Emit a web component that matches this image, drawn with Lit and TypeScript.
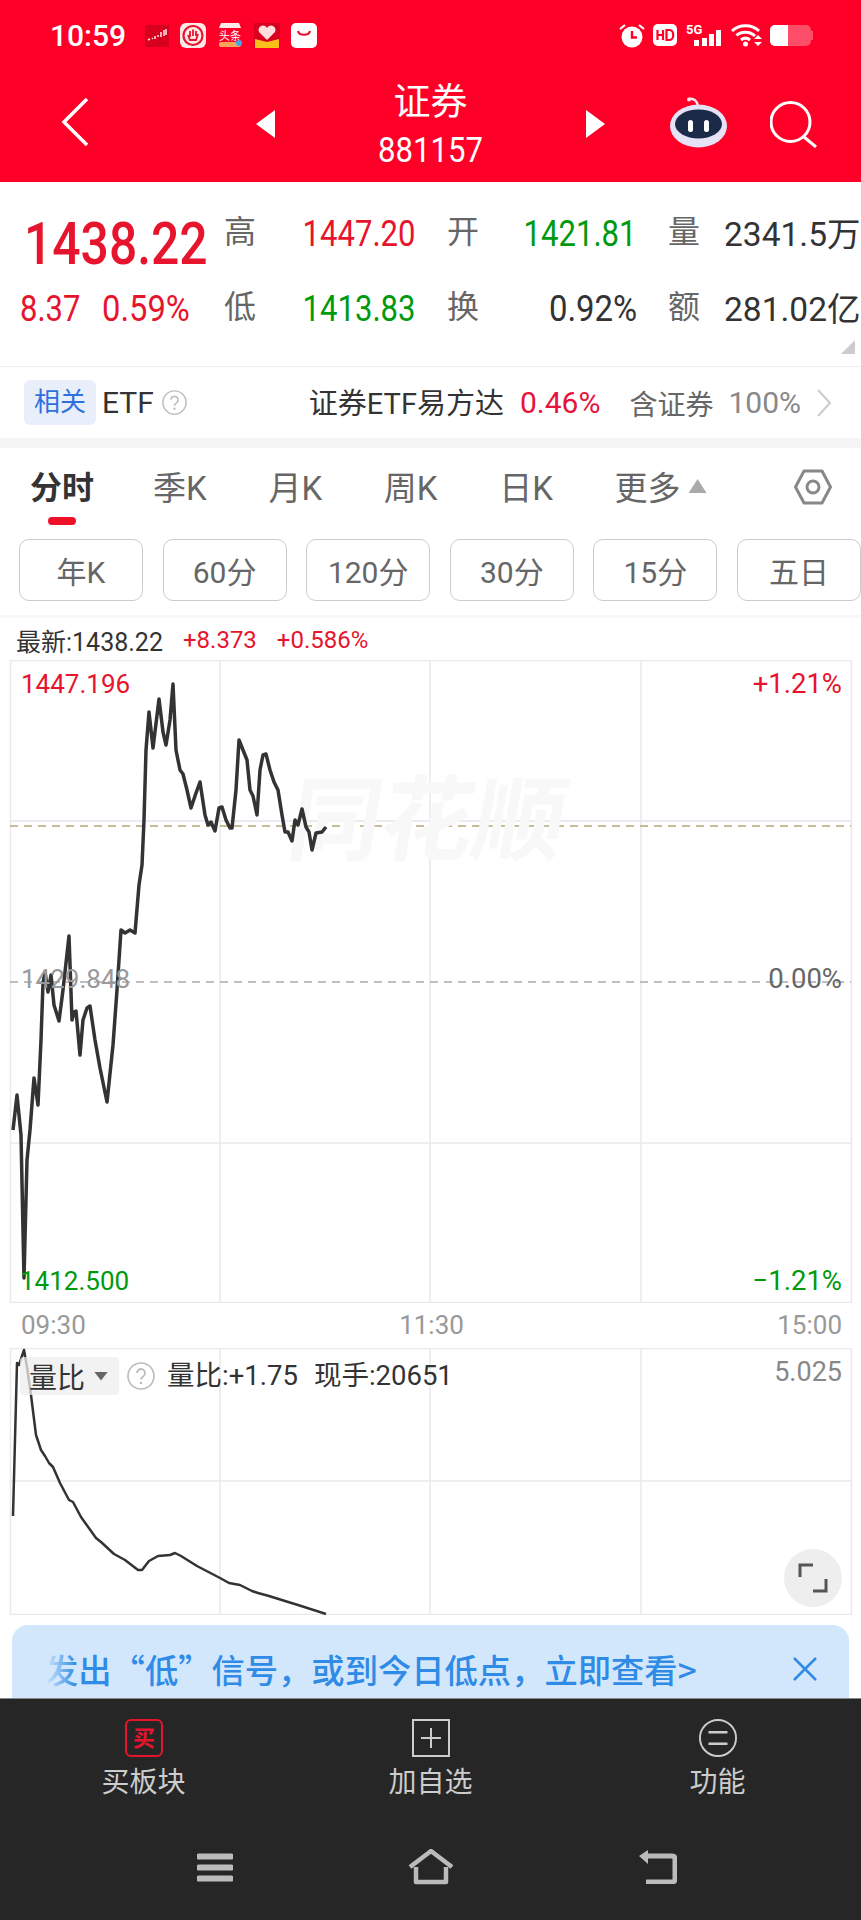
import { LitElement, html, css } from 'lit';
import { customElement } from 'lit/decorators.js';

// page coordinates read off the reference, the svgs use the same space via viewBox
const PRICE = [[13,1130],[17,1095],[21,1135],[24,1278],[27,1160],[30,1130],[34,1078],[38,1105],[41,1040],[43,983],[45,972],[48,992],[51,975],[54,1005],[59,1021],[63,990],[69,936],[72,1020],[74,1012],[76,1011],[80,1055],[83,1020],[87,1008],[90,1006],[95,1040],[100,1068],[107,1102],[113,1045],[117,990],[121,930],[125,933],[130,930],[135,933],[139,885],[142,865],[144,820],[146,750],[149,712],[153,748],[159,699],[163,732],[166,745],[170,720],[173,684],[176,750],[180,770],[183,774],[187,790],[191,808],[196,793],[200,782],[205,815],[208,825],[211,822],[215,831],[219,808],[222,807],[226,820],[230,828],[232,828],[236,790],[239,740],[243,750],[247,760],[250,790],[253,796],[257,815],[260,770],[263,755],[266,754],[270,770],[274,782],[278,790],[282,815],[285,832],[288,832],[292,841],[295,820],[298,825],[302,809],[306,827],[309,832],[312,850],[316,833],[322,832],[326,827]];
const RATIO = [[13,1516],[17,1363],[19,1365],[24,1350],[27,1367],[31,1395],[36,1435],[41,1450],[45,1456],[49,1463],[53,1467],[60,1483],[69,1500],[73,1502],[81,1517],[96,1538],[101,1542],[114,1554],[125,1560],[138,1570],[142,1570],[149,1561],[158,1556],[170,1555],[175,1553],[181,1556],[197,1566],[220,1578],[229,1583],[240,1585],[252,1591],[258,1593],[269,1596],[285,1601],[298,1605],[326,1614]];

const pts = (list: number[][]) => list.map((p) => p.join(',')).join(' ');

const RANGES = ['年K', '60分', '120分', '30分', '15分', '五日'];
const TABS = ['季K', '月K', '周K', '日K'];

@customElement('app-root')
export class AppRoot extends LitElement {
  static styles = css`
    :host {
      display: block;
      width: 861px;
      height: 1920px;
      overflow: hidden;
      background: #fff;
      font-family: Roboto, "Noto Sans CJK SC", sans-serif;
      color: #333;
    }
    svg { display: block; flex: none; }

    .head { height: 182px; background: #fe0027; color: #fff; }
    .status { height: 70px; display: flex; align-items: center; padding: 0 48px 0 50px; gap: 11px; }
    .time { font-size: 30px; font-weight: 500; width: 84px; }
    .status-right { margin-left: auto; display: flex; align-items: center; gap: 8px; }
    .nav { height: 112px; display: flex; align-items: center; padding-left: 61px; }
    .nav .back { margin-right: 167px; margin-top: -8px; }
    .tri { margin-top: -4px; }
    .title { width: 311px; text-align: center; }
    .title .name { font-size: 37px; line-height: 50px; }
    .title .code { font-size: 35px; line-height: 46px; transform: scaleX(.89); }
    .robot { margin: -7px 0 0 65px; }
    .search { margin: -5px 0 0 42px; }

    .quote {
      position: relative;
      height: 184px;
      box-sizing: border-box;
      padding-top: 14px;
      display: grid;
      grid-template-columns: 224px 33px 159px 31px 33px 157px 31px 34px 159px;
      grid-template-rows: 75px 75px;
      align-items: center;
      font-size: 37px;
    }
    .price {
      font-size: 60px; font-weight: 500; color: #e6142d; margin-left: 24px; line-height: 50px;
      align-self: end; margin-bottom: 2px; white-space: nowrap; transform: scaleX(.83); transform-origin: left center;
    }
    .change { color: #e6142d; font-size: 36px; padding-left: 20px; display: flex; gap: 12px; white-space: nowrap; }
    .change span { display: inline-block; transform: scaleX(.86); transform-origin: left center; }
    .change span + span { transform: scaleX(.91); }
    .lbl { font-size: 32px; color: #666; margin-top: -9px; }
    .val { justify-self: end; white-space: nowrap; transform: scaleX(.84); transform-origin: right center; }
    .val.pct { transform: scaleX(.89); }
    .val.wide { justify-self: start; margin: 2px 0 0 22px; font-size: 33.500px; transform: none; line-height: 42px; }
    .red { color: #e6142d; }
    .green { color: #009a0e; }
    .corner {
      position: absolute; left: 841px; top: 158px; width: 14px; height: 14px;
      background: #ccc; clip-path: polygon(100% 0, 100% 100%, 0 100%);
    }

    .etf {
      height: 72px; box-sizing: border-box; border-top: 1px solid #eee;
      display: flex; align-items: center; padding: 0 30px 0 24px; font-size: 30px;
    }
    .badge { width: 72px; height: 45px; line-height: 45px; text-align: center; background: #e8effb; color: #2f6fde; border-radius: 6px; margin-right: 6px; font-size: 26px; }
    .etf .help { margin-left: 8px; }
    .etf-right { margin-left: auto; display: flex; align-items: center; font-size: 29px; }
    .etf-right .fund { margin-top: -3px; }
    .etf-right .pct { margin: 0 29px 0 16px; color: #e6143c; font-size: 30px; }
    .etf-right .share { color: #666; font-size: 28px; }
    .etf-right .full { color: #888; margin: 0 16px 0 15px; font-size: 30px; }

    .band { height: 10px; background: #f5f5f5; }

    .tabs { height: 91px; display: flex; align-items: flex-start; padding: 14px 0 0 30px; box-sizing: border-box; font-size: 33px; color: #666; position: relative; }
    .tabs span { width: 115.4px; flex: none; }
    .tabs .on { width: 123px; font-size: 32px; font-weight: 700; color: #333; position: relative; }
    .tabs .on::after {
      content: ""; position: absolute; left: 18px; top: 55px; width: 28px; height: 8px;
      background: #ee1029; border-radius: 4px;
    }
    .more { display: flex; align-items: center; gap: 8px; }
    .caret { width: 18px; height: 14px; background: #aaa; clip-path: polygon(50% 0, 100% 100%, 0 100%); }
    .hex { position: absolute; left: 794px; top: 20px; }

    .ranges { display: flex; gap: 19.6px; padding-left: 19px; }
    .range {
      flex: none; width: 124px; height: 62px; box-sizing: border-box; border: 1px solid #ccc; border-radius: 10px;
      display: flex; align-items: center; justify-content: center; font-size: 30px; color: #666;
    }

    .latest {
      margin-top: 14px; height: 45px; box-sizing: border-box; border-top: 3px solid #f8f8f8; padding-top: 2px;
      display: flex; align-items: center; padding-left: 16px; font-size: 25px; gap: 20px; color: #333;
    }
    .latest .red { font-size: 24px; }

    .chart { position: relative; height: 643px; }
    .sub { position: relative; height: 267px; }
    .abs { position: absolute; font-size: 26px; line-height: 30px; white-space: nowrap; }
    .mark {
      position: absolute; left: 290px; top: 112px; font-size: 92px; line-height: 100px; font-weight: 700;
      color: #f8f8f8; transform: skewX(-10deg); white-space: nowrap;
    }
    .line { position: absolute; left: 0; top: 0; }
    .hi { left: 21px; top: 9px; color: #e6142d; }
    .up { right: 19px; top: 9px; color: #e6142d; font-size: 27.500px; }
    .mid { left: 21px; top: 304px; color: #999; }
    .zero { right: 19px; top: 304px; color: #666; font-size: 27.500px; }
    .lo { left: 20px; top: 606px; color: #009a0e; }
    .dn { right: 19px; top: 606px; color: #009a0e; font-size: 27.500px; }

    .times { height: 45px; display: flex; justify-content: space-between; align-items: center; padding: 0 19px 2px 21px; box-sizing: border-box; font-size: 26px; color: #999; }

    .chip {
      position: absolute; left: 20px; top: 9px; width: 99px; height: 38px; border-radius: 4px;
      background: rgba(238, 238, 238, .75); display: flex; align-items: center; padding-left: 9px; box-sizing: border-box;
      font-size: 28px; gap: 9px;
    }
    .chip i { width: 14px; height: 9px; background: #666; clip-path: polygon(0 0, 100% 0, 50% 100%); }
    .sub .help { position: absolute; left: 127px; top: 14px; }
    .sub-info { position: absolute; left: 167px; top: 9px; display: flex; gap: 16px; font-size: 27.500px; line-height: 38px; color: #333; }
    .ratio-max { right: 19px; top: 9px; color: #888; font-size: 27px; }
    .expand {
      position: absolute; left: 784px; top: 201px; width: 58px; height: 58px; border-radius: 50%;
      background: #eee; display: flex; align-items: center; justify-content: center;
    }

    .banner {
      position: relative; margin: 10px 12px 0; height: 73px; background: #d3e7fc; border-radius: 16px 16px 0 0;
      display: flex; align-items: center; padding: 14px 0 0 33px; box-sizing: border-box;
      color: #2f8be6; font: 500 33.300px "Noto Sans CJK SC", sans-serif; white-space: nowrap;
    }
    .banner .fade { position: absolute; left: 28px; top: 0; width: 36px; height: 100%; background: linear-gradient(90deg, #d3e7fc 15%, rgba(211, 231, 252, 0)); }
    .banner .close { position: absolute; left: 781px; top: 32px; }

    .bar { height: 222px; background: #262626; border-top: 1px solid #888; box-sizing: border-box; }
    .actions { display: grid; grid-template-columns: repeat(3, 287px); height: 118px; padding-top: 20px; box-sizing: border-box; }
    .action { display: flex; flex-direction: column; align-items: center; color: #ccc; font-size: 28px; line-height: 40px; gap: 6px; }
    .sys { display: flex; align-items: center; padding: 32px 0 0 197px; }
    .sys .home { margin-left: 175px; }
    .sys .ret { margin-left: 185px; }
  `;

  private help(size: number) {
    return html`<svg class="help" width=${size} height=${size} viewBox="0 0 28 28">
      <circle cx="14" cy="14" r="13" fill="none" stroke="#bbb" stroke-width="1.6"></circle>
      <path d="M10 11a4 4 0 1 1 6.2 3.4c-1.4.9-2.2 1.6-2.2 3.2" fill="none" stroke="#bbb" stroke-width="1.8"></path>
      <circle cx="14" cy="21" r="1.3" fill="#bbb"></circle>
    </svg>`;
  }

  private statusLeft() {
    return html`
      <svg width="24" height="25" viewBox="0 0 24 25">
        <rect y="2" width="24" height="22" fill="#d8001f"></rect>
        <path d="M3 17l2-1M7 15l1 1M10 13v3M13 12v2M16 9v5M19 7v6M21 6v6" stroke="#ffd9d9" stroke-width="1.6" fill="none"></path>
      </svg>
      <svg width="26" height="25" viewBox="0 0 26 25">
        <rect width="26" height="25" rx="6" fill="#ffe8e8"></rect>
        <circle cx="13" cy="12.5" r="9.5" fill="none" stroke="#e6142d" stroke-width="2.2"></circle>
        <path d="M8 12l2 5h6l2-6M10 14V8M13 13V6.500M16 13V8" fill="none" stroke="#e6142d" stroke-width="1.8"></path>
      </svg>
      <svg width="26" height="25" viewBox="0 0 26 25">
        <path d="M2 5L4 0h18l2 5z" fill="#ffeaea"></path>
        <text x="13" y="17" font-size="11" text-anchor="middle" fill="#fff" font-family="Noto Sans CJK SC">头条</text>
        <rect x="2" y="19" width="22" height="5" rx="2" fill="#f7a55b"></rect>
        <circle cx="22" cy="20" r="3" fill="#3fa7e8"></circle>
      </svg>
      <svg width="26" height="25" viewBox="0 0 26 25">
        <rect width="26" height="25" fill="#d8001f"></rect>
        <path d="M13 17L5 9a4 4 0 0 1 8-4 4 4 0 0 1 8 4z" fill="#ffdede"></path>
        <path d="M1 16l12 3 12-3v9H1z" fill="#fbbf1c"></path>
      </svg>
      <svg width="26" height="25" viewBox="0 0 26 25">
        <rect width="26" height="25" rx="5" fill="#fff"></rect>
        <path d="M7 8c1 5 11 5 12 0" fill="none" stroke="#e6142d" stroke-width="2.2"></path>
      </svg>
    `;
  }

  private statusRight() {
    return html`
      <div class="status-right">
        <svg width="26" height="25" viewBox="0 0 26 25">
          <circle cx="13" cy="14" r="10.5" fill="#fff"></circle>
          <path d="M13 8v6.500h5" fill="none" stroke="#fe0027" stroke-width="2.4"></path>
          <path d="M1 6l5-4M25 6l-5-4" stroke="#fff" stroke-width="2.2"></path>
        </svg>
        <svg width="24" height="22" viewBox="0 0 24 22">
          <rect width="24" height="22" rx="5" fill="#fff"></rect>
          <path d="M4.500 6v10M10 6v10M4.500 11H10M13.500 6v10h3c5 0 5-10 0-10z" fill="none" stroke="#fe0027" stroke-width="2.2"></path>
        </svg>
        <svg width="37" height="24" viewBox="0 0 37 24">
          <text x="1" y="11" font-size="13" font-weight="700" fill="#fff" font-family="Roboto">5G</text>
          <rect x="9" y="17" width="5" height="6" fill="#fff"></rect>
          <rect x="17" y="15" width="5" height="8" fill="#fff"></rect>
          <rect x="24" y="11" width="5" height="12" fill="#fff"></rect>
          <rect x="31" y="7" width="5" height="16" fill="#fff"></rect>
        </svg>
        <svg width="32" height="23" viewBox="0 0 32 23">
          <path d="M2 7C9 0 22 0 29 7M6.500 11.500C11 7 20 7 25 12M11 16c3-2.500 6-2.500 9 0" fill="none" stroke="#fff" stroke-width="3"></path>
          <circle cx="15.500" cy="20" r="2.500" fill="#fff"></circle>
          <path d="M28 11l4 4h-8zM28 22l4-4h-8z" fill="#fff"></path>
        </svg>
        <svg width="43" height="21" viewBox="0 0 43 21">
          <rect width="41" height="21" rx="5" fill="#fff" fill-opacity=".3"></rect>
          <path d="M5 0h13v21H5a5 5 0 0 1-5-5V5a5 5 0 0 1 5-5z" fill="#fff"></path>
          <rect x="41" y="6" width="2" height="9" fill="#fff" fill-opacity=".3"></rect>
        </svg>
      </div>
    `;
  }

  private navBar() {
    return html`
      <div class="nav">
        <svg class="back" width="28" height="50" viewBox="0 0 28 50">
          <path d="M26 2L3 25l23 23" fill="none" stroke="#fff" stroke-width="3.500"></path>
        </svg>
        <svg class="tri" width="19" height="28" viewBox="0 0 19 28"><path d="M19 0v28L0 14z" fill="#fff"></path></svg>
        <div class="title">
          <div class="name">证券</div>
          <div class="code">881157</div>
        </div>
        <svg class="tri" width="19" height="28" viewBox="0 0 19 28"><path d="M0 0v28l19-14z" fill="#fff"></path></svg>
        <svg class="robot" width="58" height="52" viewBox="0 0 58 52">
          <path d="M19 2c5-1 8 2 9 7" fill="none" stroke="#f6e4ee" stroke-width="2.500"></path>
          <circle cx="19" cy="2.500" r="2" fill="#f6e4ee"></circle>
          <ellipse cx="28.500" cy="29" rx="28.500" ry="21.500" fill="#e6e2f6"></ellipse>
          <ellipse cx="28.500" cy="27" rx="23.500" ry="14.500" fill="#1c2a4a"></ellipse>
          <rect x="18" y="23" width="5" height="12" rx="2.500" fill="#fff"></rect>
          <rect x="34" y="23" width="5" height="12" rx="2.500" fill="#fff"></rect>
        </svg>
        <svg class="search" width="48" height="48" viewBox="0 0 48 48">
          <circle cx="20.500" cy="22" r="19.500" fill="none" stroke="#fff" stroke-width="3"></circle>
          <path d="M34 37l12 10" stroke="#fff" stroke-width="3"></path>
        </svg>
      </div>
    `;
  }

  private quote() {
    return html`
      <div class="quote">
        <div class="price">1438.22</div>
        <div class="lbl">高</div><div class="val red">1447.20</div><div></div>
        <div class="lbl">开</div><div class="val green">1421.81</div><div></div>
        <div class="lbl">量</div><div class="val wide">2341.5万</div>
        <div class="change"><span>8.37</span><span>0.59%</span></div>
        <div class="lbl">低</div><div class="val green">1413.83</div><div></div>
        <div class="lbl">换</div><div class="val pct">0.92%</div><div></div>
        <div class="lbl">额</div><div class="val wide">281.02亿</div>
        <div class="corner"></div>
      </div>
    `;
  }

  private etfRow() {
    return html`
      <div class="etf">
        <span class="badge">相关</span>
        <span>ETF</span>
        ${this.help(25)}
        <div class="etf-right">
          <span class="fund">证券ETF易方达</span>
          <span class="pct">0.46%</span>
          <span class="share">含证券</span>
          <span class="full">100%</span>
          <svg width="14" height="28" viewBox="0 0 14 28"><path d="M1 1l12 13L1 27" fill="none" stroke="#ccc" stroke-width="2"></path></svg>
        </div>
      </div>
    `;
  }

  private tabs() {
    return html`
      <div class="tabs">
        <span class="on">分时</span>
        ${TABS.map((t) => html`<span>${t}</span>`)}
        <span class="more">更多<i class="caret"></i></span>
        <svg class="hex" width="38" height="38" viewBox="0 0 38 38">
          <path d="M10 3h18l8.500 16L28 35H10L1.500 19z" fill="none" stroke="#888" stroke-width="3" stroke-linejoin="round"></path>
          <circle cx="19" cy="19" r="6" fill="none" stroke="#888" stroke-width="3"></circle>
        </svg>
      </div>
      <div class="ranges">${RANGES.map((r) => html`<div class="range">${r}</div>`)}</div>
    `;
  }

  private priceChart() {
    return html`
      <div class="chart">
        <svg width="861" height="643" viewBox="0 660 861 643">
          <g stroke="#e9e9e9" stroke-width="1.500" fill="none">
            <rect x="10.500" y="660.500" width="841" height="642"></rect>
            <path d="M220 660v643M430 660v643M641 660v643M10 1143h841"></path>
          </g>
          <path d="M10 821h841" stroke="#e6e2ee" stroke-width="1.500"></path>
          <path d="M10 826h841" stroke="#b5a67a" stroke-width="1.500" stroke-dasharray="8 6"></path>
          <path d="M10 982h841" stroke="#aaa" stroke-width="1.500" stroke-dasharray="8 6"></path>
        </svg>
        <div class="mark">同花顺</div>
        <svg class="line" width="861" height="643" viewBox="0 660 861 643">
          <polyline points=${pts(PRICE)} fill="none" stroke="#333" stroke-width="3.500" stroke-linejoin="round"></polyline>
        </svg>
        <div class="abs hi">1447.196</div>
        <div class="abs up">+1.21%</div>
        <div class="abs mid">1429.848</div>
        <div class="abs zero">0.00%</div>
        <div class="abs lo">1412.500</div>
        <div class="abs dn">−1.21%</div>
      </div>
    `;
  }

  private ratioChart() {
    return html`
      <div class="sub">
        <svg width="861" height="267" viewBox="0 1348 861 267">
          <g stroke="#e9e9e9" stroke-width="1.500" fill="none">
            <rect x="10.500" y="1348.500" width="841" height="266"></rect>
            <path d="M220 1348v267M430 1348v267M641 1348v267M10 1481h841"></path>
          </g>
          <polyline points=${pts(RATIO)} fill="none" stroke="#333" stroke-width="2.500" stroke-linejoin="round"></polyline>
        </svg>
        <div class="chip">量比<i></i></div>
        ${this.help(28)}
        <div class="sub-info"><span>量比:+1.75</span><span>现手:20651</span></div>
        <div class="abs ratio-max">5.025</div>
        <div class="expand">
          <svg width="30" height="30" viewBox="0 0 30 30">
            <path d="M2 14V2h13M28 16v12H15" fill="none" stroke="#555" stroke-width="3"></path>
          </svg>
        </div>
      </div>
    `;
  }

  private bottom() {
    return html`
      <div class="banner">
        <span>发出“低”信号，或到今日低点，立即查看&gt;</span>
        <div class="fade"></div>
        <svg class="close" width="24" height="24" viewBox="0 0 24 24">
          <path d="M1 1l22 22M23 1L1 23" stroke="#2f8be6" stroke-width="2.500"></path>
        </svg>
      </div>
      <div class="bar">
        <div class="actions">
          <div class="action">
            <svg width="38" height="38" viewBox="0 0 38 38">
              <rect x="1" y="1" width="36" height="36" rx="5" fill="none" stroke="#e6142d" stroke-width="2"></rect>
              <text x="19" y="27" font-size="22" font-weight="700" text-anchor="middle" fill="#e6142d" font-family="Noto Sans CJK SC">买</text>
            </svg>
            买板块
          </div>
          <div class="action">
            <svg width="38" height="38" viewBox="0 0 38 38">
              <rect x="1" y="1" width="36" height="36" fill="none" stroke="#ccc" stroke-width="2"></rect>
              <path d="M19 9v20M9 19h20" stroke="#ccc" stroke-width="2"></path>
            </svg>
            加自选
          </div>
          <div class="action">
            <svg width="40" height="38" viewBox="0 0 40 40">
              <circle cx="20" cy="20" r="19" fill="none" stroke="#ccc" stroke-width="2"></circle>
              <path d="M10 14h20M10 26h20" stroke="#ccc" stroke-width="2.500"></path>
            </svg>
            功能
          </div>
        </div>
        <div class="sys">
          <svg width="36" height="29" viewBox="0 0 36 29">
            <path d="M2 3.500h32M2 14.500h32M2 25.500h32" stroke="#bbb" stroke-width="6" stroke-linecap="round"></path>
          </svg>
          <svg class="home" width="46" height="36" viewBox="0 0 46 36">
            <path d="M2 18L23 2l21 16M8 18v15h30V18" fill="none" stroke="#bbb" stroke-width="4.500" stroke-linejoin="round"></path>
          </svg>
          <svg class="ret" width="38" height="34" viewBox="0 0 38 34">
            <path d="M8 6h25c2 0 3 1 3 3v20c0 2-1 3-3 3H7" fill="none" stroke="#bbb" stroke-width="5"></path>
            <path d="M9 0v14L0 6z" fill="#bbb"></path>
          </svg>
        </div>
      </div>
    `;
  }

  render() {
    return html`
      <div class="head">
        <div class="status">
          <span class="time">10:59</span>
          ${this.statusLeft()}
          ${this.statusRight()}
        </div>
        ${this.navBar()}
      </div>
      ${this.quote()}
      ${this.etfRow()}
      <div class="band"></div>
      ${this.tabs()}
      <div class="latest">
        <span>最新:1438.22</span>
        <span class="red">+8.373</span>
        <span class="red">+0.586%</span>
      </div>
      ${this.priceChart()}
      <div class="times"><span>09:30</span><span>11:30</span><span>15:00</span></div>
      ${this.ratioChart()}
      ${this.bottom()}
    `;
  }
}
